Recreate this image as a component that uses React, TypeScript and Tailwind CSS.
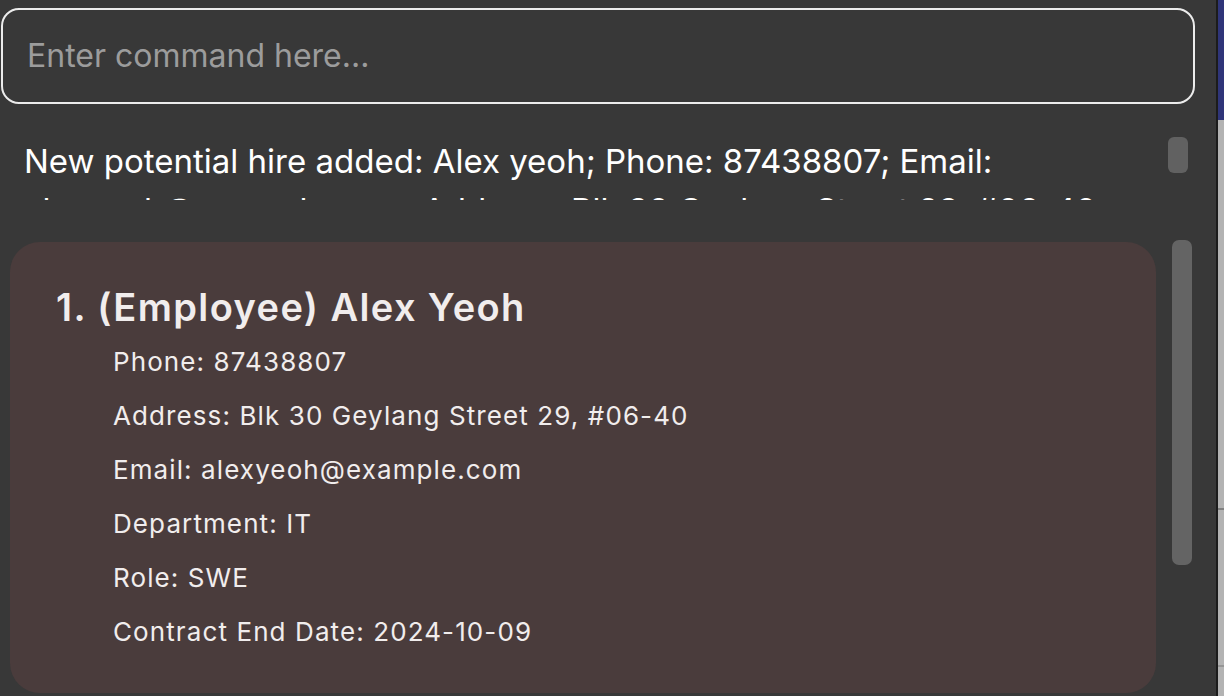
import React from 'react';

const details = [
  'Phone: 87438807',
  'Address: Blk 30 Geylang Street 29, #06-40',
  'Email: alexyeoh@example.com',
  'Department: IT',
  'Role: SWE',
  'Contract End Date: 2024-10-09',
];

export default function App() {
  return (
    <div
      className="flex h-[696px] w-[1224px] overflow-hidden bg-[#383838]"
      style={{ fontFamily: 'Inter, "Noto Sans", sans-serif' }}
    >
      <div className="flex w-[1216px] flex-col">
        {/* command box */}
        <div className="pl-[1px] pr-[21px] pt-[8px]">
          <div className="flex h-[96px] items-center rounded-[18px] border-2 border-[#ececec] pl-[24px] text-[32px] text-[#9c9c9c]">
            Enter command here...
          </div>
        </div>

        {/* result display */}
        <div className="flex pt-[33px]">
          <div className="h-[63px] w-[1150px] overflow-hidden pl-[24px] text-[33px] leading-[49px] text-white">
            New potential hire added: Alex yeoh; Phone: 87438807; Email: alexyeoh@example.com; Address: Blk 30 Geylang Street 29, #06-40; Department: IT; Role: SWE; Contract End Date: 2024-10-09
          </div>
          <div className="ml-[18px] h-[36px] w-[20px] rounded-[6px] bg-[#616161]" />
        </div>

        {/* person list */}
        <div className="flex flex-1 pt-[42px]">
          <div className="ml-[10px] h-[451px] w-[1146px] rounded-[30px] bg-[#4a3c3c] pl-[46px] pt-[38px] text-[#f1eded]">
            <div className="flex h-[54px] items-center text-[38px] font-semibold tracking-[1.4px]">
              1. (Employee) Alex Yeoh
            </div>
            <div className="pl-[57px]">
              {details.map(d => (
                <div key={d} className="flex h-[54px] items-center text-[26px] tracking-[1.1px]">
                  {d}
                </div>
              ))}
            </div>
          </div>
          <div className="ml-[16px] mt-[-2px] h-[325px] w-[20px] rounded-[7px] bg-[#646464]" />
        </div>
      </div>

      {/* neighbouring window edge */}
      <div className="flex w-[8px] flex-col border-l-2 border-[#1c1c1c]">
        <div className="h-[120px] bg-[#2f3579]" />
        <div className="flex-1 bg-[#b3b3b3]">
          <div className="mt-[388px] h-[2px] bg-[#808080]" />
          <div className="mt-[155px] h-[2px] bg-[#959595]" />
        </div>
      </div>
    </div>
  );
}
